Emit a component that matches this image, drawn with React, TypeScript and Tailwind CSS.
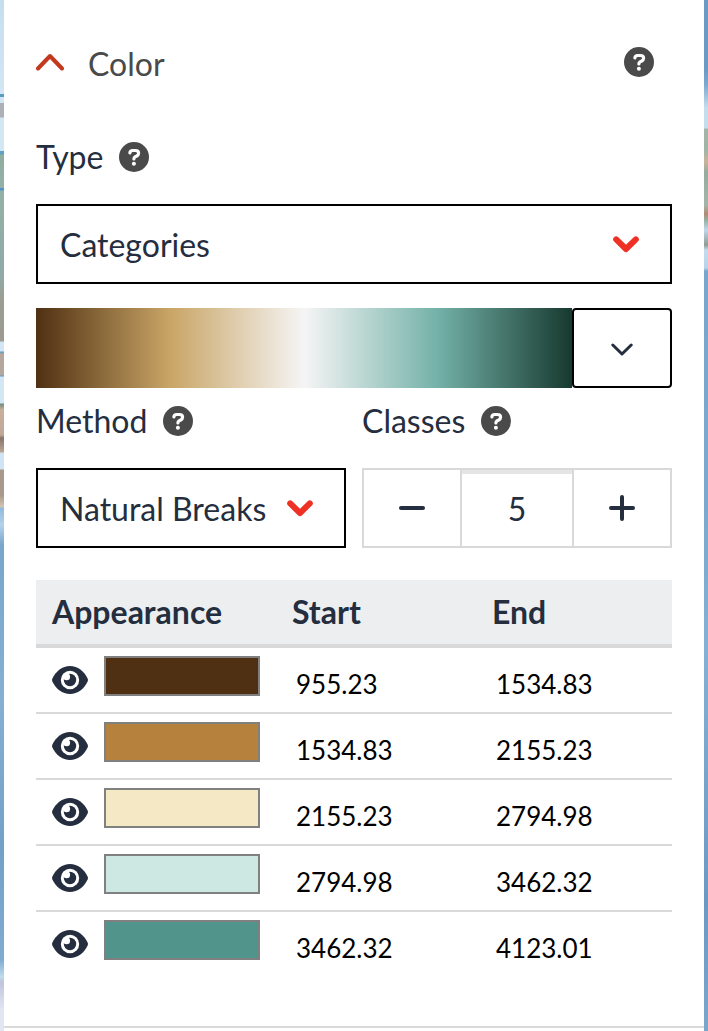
import { useState } from 'react';

type ClassBreak = { swatch: string; start: string; end: string };

const breaks: ClassBreak[] = [
  { swatch: 'bg-[#4f3012]', start: '955.23', end: '1534.83' },
  { swatch: 'bg-[#b6813c]', start: '1534.83', end: '2155.23' },
  { swatch: 'bg-[#f5e8c5]', start: '2155.23', end: '2794.98' },
  { swatch: 'bg-[#cde8e3]', start: '2794.98', end: '3462.32' },
  { swatch: 'bg-[#51948b]', start: '3462.32', end: '4123.01' },
];

function HelpButton({ topic }: { topic: string }) {
  return (
    <button type="button" aria-label={`Help: ${topic}`} className="size-[30px] shrink-0">
      <svg viewBox="0 0 30 30" className="size-full" fill="none">
        <circle cx="15" cy="15" r="15" fill="#4a4a4a" />
        <path
          d="M10.9 10.9C11 9.3 12.2 8.5 13.8 8.5H16.4C18.3 8.5 19.6 9.6 19.6 11.3C19.6 12.6 18.9 13.3 17.7 14L16 14.9C15.2 15.4 14.9 15.9 14.9 16.9"
          stroke="#fff"
          strokeWidth="3.2"
          strokeLinecap="round"
          strokeLinejoin="round"
        />
        <circle cx="14.9" cy="21.8" r="2" fill="#fff" />
      </svg>
    </button>
  );
}

function EyeIcon() {
  return (
    <svg viewBox="0 0 36 28" className="h-7 w-9" aria-hidden="true">
      <path
        d="M0.3 12.8C3.8 5.2 10.3 0 18 0S32.2 5.2 35.7 12.8Q36.2 14 35.7 15.2C32.2 22.8 25.7 28 18 28S3.8 22.8 0.3 15.2Q-0.2 14 0.3 12.8Z"
        fill="#242e3e"
      />
      <circle cx="18" cy="14" r="9.2" fill="#fff" />
      <circle cx="18" cy="14" r="6.2" fill="#242e3e" />
      <circle cx="14.6" cy="10.8" r="3.5" fill="#fff" />
    </svg>
  );
}

function SelectBox({ id, options }: { id: string; options: string[] }) {
  return (
    <div className="relative">
      <select
        id={id}
        className="h-20 w-full appearance-none border-2 border-black bg-white pt-0.5 pr-16 pl-[22px] text-[32px] text-[#242e3e]"
      >
        {options.map((option) => (
          <option key={option}>{option}</option>
        ))}
      </select>
      <svg
        viewBox="0 0 26 17"
        fill="none"
        aria-hidden="true"
        className="pointer-events-none absolute top-8 right-[33px] h-[17px] w-[26px]"
      >
        <path d="M3.2 3.4L13 13L22.8 3.4" stroke="#ee3124" strokeWidth="6" strokeLinecap="round" strokeLinejoin="round" />
      </svg>
    </div>
  );
}

export default function App() {
  const [classes, setClasses] = useState(5);
  const stepButton = 'flex items-center justify-center';

  return (
    <div className="flex min-h-screen font-['Lato',sans-serif] text-[32px] leading-10 text-[#242e3e]">
      <div className="w-1 shrink-0 bg-[linear-gradient(#c5deee_0,#d3e6f4_94px,#5b9cc4_94px,#5b9cc4_97px,#d3e6f4_97px,#d3e6f4_103px,#aeb0b8_103px,#aeb0b8_117px,#d3e6f4_118px,#d3e6f4_151px,#5fa0c4_151px,#5fa0c4_154px,#8fae9f_155px,#94b0a6_188px,#4f94c4_188px,#4f94c4_190px,#94b0a6_191px,#90aaa8_276px,#9c9d92_300px,#9c9a92_341px,#d3e6f4_342px,#d3e6f4_351px,#5b9cc4_352px,#b5a79c_354px,#b5a79c_375px,#5b9cc4_376px,#d3e6f4_377px,#d3e6f4_403px,#748d80_404px,#c9b09c_410px,#c0a898_435px,#86756a_438px,#bba595_452px,#d0e4f4_453px,#d0e4f4_469px,#a8998a_470px,#a8998a_495px,#d5c5b0_507px,#8fbade_508px,#b4d2ea_525px,#78a6cc_545px,#85b0d4_700px,#73a0c8_850px,#80acd2_960px,#c0dcec_977px,#c0c4dc_982px,#e2e6f3_1010px,#e2e6f3_1031px)]" />
      <main className="min-w-0 flex-1 bg-white">
        <div className="flex flex-col border-b-2 border-[#d9dada] px-8 pt-11 pb-12">
          <header className="flex h-10 items-center pr-[18px] text-[#4a4a4a]">
            <button type="button" aria-expanded="true" className="flex flex-1 items-center gap-6 text-left">
              <svg viewBox="0 0 28 18" fill="none" aria-hidden="true" className="mb-1 h-[18px] w-7">
                <path d="M2 15.5L14 3L26 15.5" stroke="#c3391d" strokeWidth="4" strokeLinecap="round" strokeLinejoin="round" />
              </svg>
              <span>Color</span>
            </button>
            <div className="flex pb-1">
              <HelpButton topic="Color" />
            </div>
          </header>

          <section className="mt-[53px] flex flex-col">
            <div className="flex h-10 items-center gap-4">
              <label htmlFor="type">Type</label>
              <HelpButton topic="Type" />
            </div>
            <div className="mt-[27px]">
              <SelectBox id="type" options={['Categories', 'Graduated']} />
            </div>
          </section>

          <div className="mt-6 flex h-20">
            <div className="flex-1 bg-[linear-gradient(to_right,#4f3012,#c9a566_25%,#f5f5f5_50%,#73b1a8_75%,#17392f)]" />
            <button
              type="button"
              aria-label="Choose color ramp"
              className="flex w-[100px] items-center justify-center rounded border-2 border-black"
            >
              <svg viewBox="0 0 22 13" fill="none" aria-hidden="true" className="mt-0.5 h-[13px] w-[22px]">
                <path d="M1.8 2L11 11L20.2 2" stroke="#242e3e" strokeWidth="3" strokeLinecap="round" strokeLinejoin="round" />
              </svg>
            </button>
          </div>

          <div className="mt-3 grid grid-cols-2 gap-4">
            <section>
              <div className="flex h-[42px] items-center gap-4">
                <label htmlFor="method">Method</label>
                <HelpButton topic="Method" />
              </div>
              <div className="mt-[26px]">
                <SelectBox id="method" options={['Natural Breaks', 'Quantile']} />
              </div>
            </section>
            <section>
              <div className="flex h-[42px] items-center gap-4">
                <label htmlFor="classes">Classes</label>
                <HelpButton topic="Classes" />
              </div>
              <div className="mt-[26px] flex h-20 divide-x-2 divide-[#d9d9d9] border-2 border-[#d9d9d9]">
                <button
                  type="button"
                  aria-label="Fewer classes"
                  onClick={() => setClasses(Math.max(1, classes - 1))}
                  className={`${stepButton} w-[98px]`}
                >
                  <svg viewBox="0 0 26 26" className="size-[26px]" aria-hidden="true">
                    <path d="M2 13H24" stroke="#242e3e" strokeWidth="4" strokeLinecap="round" />
                  </svg>
                </button>
                <input
                  id="classes"
                  value={classes}
                  onChange={(event) => setClasses(Number(event.target.value) || 1)}
                  className="min-w-0 flex-1 pt-0.5 text-center shadow-[inset_0_4px_#e5e5e5]"
                />
                <button
                  type="button"
                  aria-label="More classes"
                  onClick={() => setClasses(classes + 1)}
                  className={`${stepButton} w-24`}
                >
                  <svg viewBox="0 0 26 26" className="size-[26px]" aria-hidden="true">
                    <path d="M2 13H24M13 2V24" stroke="#242e3e" strokeWidth="4" strokeLinecap="round" />
                  </svg>
                </button>
              </div>
            </section>
          </div>

          <table className="mt-8 w-full table-fixed border-separate border-spacing-0 text-left">
            <thead className="bg-[#edeef0]">
              <tr className="h-[68px]">
                <th className="w-60 border-b-4 border-[#d9d9d9] pl-4">Appearance</th>
                <th className="w-[200px] border-b-4 border-[#d9d9d9] pl-4">Start</th>
                <th className="border-b-4 border-[#d9d9d9] pl-4">End</th>
              </tr>
            </thead>
            <tbody className="[&>tr:not(:last-child)>td]:border-b-2">
              {breaks.map((row) => (
                <tr key={row.start} className="h-[66px] text-[26px] leading-8 text-black">
                  <td className="border-[#d9d9d9] pt-2 pl-4 align-top">
                    <div className="flex gap-4">
                      <button type="button" aria-label={`Toggle class ${row.start} to ${row.end}`} className="flex h-12 items-center">
                        <EyeIcon />
                      </button>
                      <button
                        type="button"
                        aria-label={`Color for ${row.start} to ${row.end}`}
                        className={`h-10 w-[156px] border-2 border-[#808080] ${row.swatch}`}
                      />
                    </div>
                  </td>
                  <td className="border-[#d9d9d9] pt-5 pl-5 align-top">{row.start}</td>
                  <td className="border-[#d9d9d9] pt-5 pl-5 align-top">{row.end}</td>
                </tr>
              ))}
            </tbody>
          </table>
        </div>
      </main>
      <div className="w-1 shrink-0 bg-[linear-gradient(#6b9ac4_0,#6b9ac4_70px,#7aa8d0_84px,#c5deee_108px,#c5deee_128px,#a3b5a8_129px,#a0b5a6_150px,#c8b49c_162px,#96ac9e_172px,#a3b5a8_205px,#b08b74_214px,#94b0a0_220px,#c0d8ec_230px,#8e9c94_245px,#c4dcee_250px,#b8d4ea_268px,#79a6cd_271px,#7aa8ce_500px,#83b0d4_650px,#76a2ca_800px,#6b99c4_900px,#7aa6cc_1031px)]" />
    </div>
  );
}
